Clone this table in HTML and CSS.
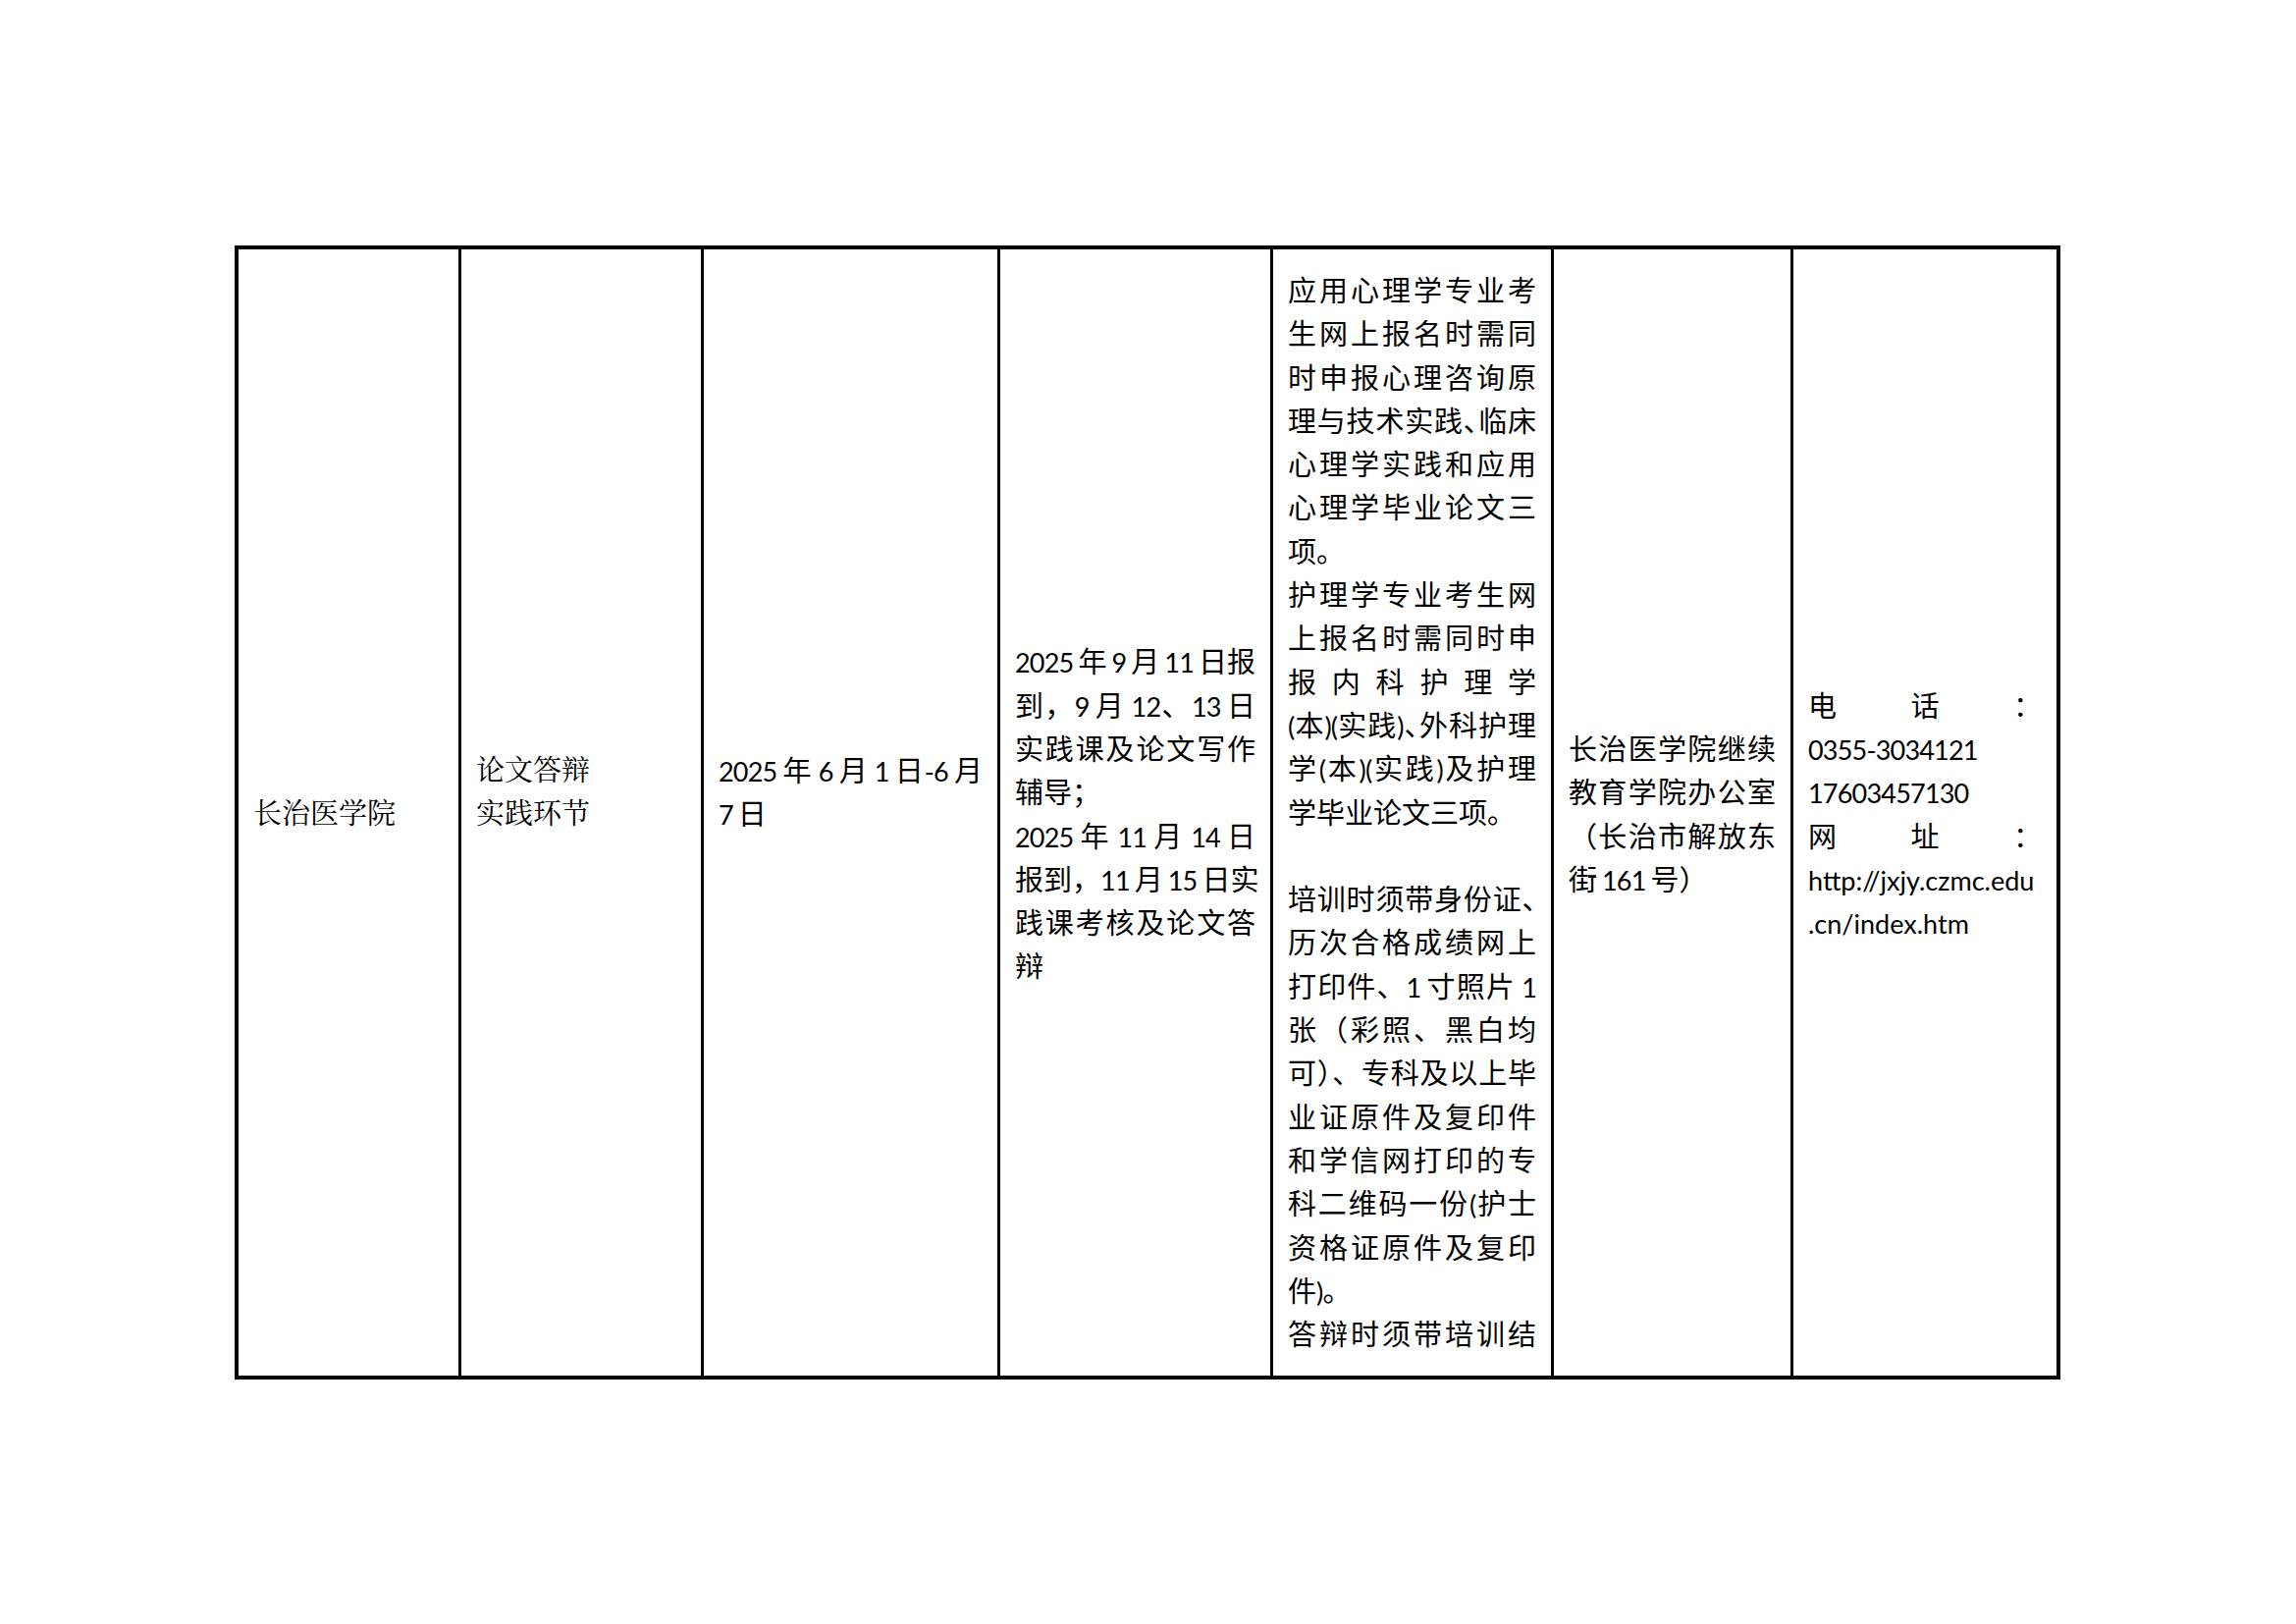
FILE: index.html
```html
<!DOCTYPE html>
<html lang="zh-CN">
<head>
<meta charset="utf-8">
<title>长治医学院</title>
<link rel="stylesheet" href="styles.css">
</head>
<body>
<div class="page">
  <div class="tbl">
    <div class="cell song">
      <div class="ln">长治医学院</div>
    </div>
    <div class="cell song">
      <div class="ln">论文答辩</div>
      <div class="ln">实践环节</div>
      <div class="ln"></div>
    </div>
    <div class="cell">
      <div class="ln j"><span class="lat">2025</span> 年 <span class="lat">6</span> 月 <span class="lat">1</span> 日<span class="lat">-6</span> 月</div>
      <div class="ln"><span class="lat">7</span> 日</div>
      <div class="ln"></div>
    </div>
    <div class="cell">
      <div class="ln j"><span class="lat">2025</span> 年 <span class="lat">9</span> 月 <span class="lat">11</span> 日报</div>
      <div class="ln j">到，<span class="lat">9</span> 月 <span class="lat">12</span>、<span class="lat">13</span> 日</div>
      <div class="ln j">实践课及论文写作</div>
      <div class="ln">辅导；</div>
      <div class="ln j"><span class="lat">2025</span> 年 <span class="lat">11</span> 月 <span class="lat">14</span> 日</div>
      <div class="ln j">报到，<span class="lat">11</span> 月 <span class="lat">15</span> 日实</div>
      <div class="ln j">践课考核及论文答</div>
      <div class="ln">辩</div>
    </div>
    <div class="cell top">
      <div class="ln j">应用心理学专业考</div>
      <div class="ln j">生网上报名时需同</div>
      <div class="ln j">时申报心理咨询原</div>
      <div class="ln j">理与技术实践<span class="h">、</span>临床</div>
      <div class="ln j">心理学实践和应用</div>
      <div class="ln j">心理学毕业论文三</div>
      <div class="ln">项。</div>
      <div class="ln j">护理学专业考生网</div>
      <div class="ln j">上报名时需同时申</div>
      <div class="ln j">报内科护理学</div>
      <div class="ln j"><span class="lat">(</span>本<span class="lat">)(</span>实践<span class="lat">)</span><span class="h">、</span>外科护理</div>
      <div class="ln j">学<span class="lat">(</span>本<span class="lat">)(</span>实践<span class="lat">)</span>及护理</div>
      <div class="ln">学毕业论文三项。</div>
      <div class="ln"></div>
      <div class="ln j">培训时须带身份证<span class="h">、</span></div>
      <div class="ln j">历次合格成绩网上</div>
      <div class="ln j">打印件、<span class="lat">1</span> 寸照片 <span class="lat">1</span></div>
      <div class="ln j">张（彩照、黑白均</div>
      <div class="ln j">可<span class="h">）</span>、专科及以上毕</div>
      <div class="ln j">业证原件及复印件</div>
      <div class="ln j">和学信网打印的专</div>
      <div class="ln j">科二维码一份<span class="lat">(</span>护士</div>
      <div class="ln j">资格证原件及复印</div>
      <div class="ln">件<span class="lat">)</span>。</div>
      <div class="ln j">答辩时须带培训结</div>
    </div>
    <div class="cell">
      <div class="ln j">长治医学院继续</div>
      <div class="ln j">教育学院办公室</div>
      <div class="ln j">（长治市解放东</div>
      <div class="ln">街 <span class="lat">161</span> 号）</div>
    </div>
    <div class="cell">
      <div class="ln j">电话：</div>
      <div class="ln"><span class="lat">0355-3034121</span></div>
      <div class="ln"><span class="lat">17603457130</span></div>
      <div class="ln j">网址：</div>
      <div class="ln"><span class="lat url">http://jxjy.czmc.edu</span></div>
      <div class="ln"><span class="lat url">.cn/index.htm</span></div>
    </div>
  </div>
</div>
</body>
</html>
```

FILE: styles.css
```css
html, body {
  margin: 0;
  padding: 0;
  background: #ffffff;
}

.page {
  padding: 250px 0 0 239px;
}

.tbl {
  display: grid;
  grid-template-columns: 224px 247px 302px 278px 286px 244px 271px;
  width: 1852px;
  height: 1147px;
  border: 4px solid #000;
  font-family: "Noto Sans CJK SC", sans-serif;
  font-size: 29px;
  line-height: 44.3px;
  color: #000;
}

.cell {
  border-left: 3px solid #000;
  padding: 0 15px;
  display: flex;
  flex-direction: column;
  justify-content: center;
  overflow: hidden;
  min-width: 0;
}

.cell:first-child {
  border-left: 0;
}

.cell.song {
  font-family: "Noto Serif CJK SC", "Noto Sans CJK SC", serif;
}

.cell.top {
  justify-content: flex-start;
  padding-top: 18px;
}

.ln {
  white-space: nowrap;
  height: 44.3px;
  flex: 0 0 auto;
  word-spacing: -1.5px;
}

.j {
  text-align: justify;
  text-align-last: justify;
}

.lat {
  font-family: Lato, "Liberation Sans", sans-serif;
  font-size: 27px;
  line-height: 1;
  letter-spacing: -0.8px;
  word-spacing: 0;
}

.url {
  letter-spacing: 0;
}

.h {
  font-feature-settings: "halt";
}
```
